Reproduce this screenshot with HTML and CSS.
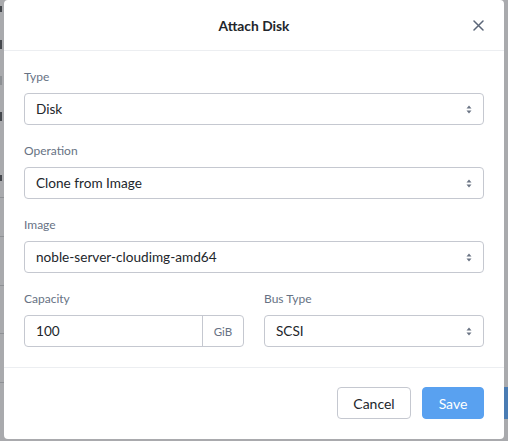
FILE: index.html
```html
<!DOCTYPE html>
<html>
<head>
<meta charset="utf-8">
<link rel="stylesheet" href="styles.css">
</head>
<body>
<div class="backdrop">
  <div class="bg-left">
    <span class="bg-l l1"></span>
    <span class="bg-l l2"></span>
    <span class="bg-l l3"></span>
    <span class="bg-l l4"></span>
    <span class="bg-l l5"></span>
    <span class="bg-line b1"></span>
    <span class="bg-line b2"></span>
    <span class="bg-line b3"></span>
    <span class="bg-line b4"></span>
    <span class="bg-line b5"></span>
  </div>
  <div class="bg-right-btn"></div>
</div>
<div class="modal">
  <div class="modal-header">
    <div class="modal-title">Attach Disk</div>
    <button class="close" aria-label="Close">
      <svg width="11" height="11" viewBox="0 0 11 11"><path d="M1 1L10 10M10 1L1 10" stroke="#5b6678" stroke-width="1.5" stroke-linecap="round"/></svg>
    </button>
  </div>
  <div class="modal-body">
    <div class="field">
      <div class="label">Type</div>
      <div class="select"><span>Disk</span><span class="arrows"><svg width="6" height="9" viewBox="0 0 6 9"><path d="M3 0.5L5.5 3.5H0.5Z M3 8.5L5.5 5.5H0.5Z" fill="#6b7484"/></svg></span></div>
    </div>
    <div class="field">
      <div class="label">Operation</div>
      <div class="select"><span>Clone from Image</span><span class="arrows"><svg width="6" height="9" viewBox="0 0 6 9"><path d="M3 0.5L5.5 3.5H0.5Z M3 8.5L5.5 5.5H0.5Z" fill="#6b7484"/></svg></span></div>
    </div>
    <div class="field">
      <div class="label">Image</div>
      <div class="select"><span>noble-server-cloudimg-amd64</span><span class="arrows"><svg width="6" height="9" viewBox="0 0 6 9"><path d="M3 0.5L5.5 3.5H0.5Z M3 8.5L5.5 5.5H0.5Z" fill="#6b7484"/></svg></span></div>
    </div>
    <div class="row">
      <div class="field">
        <div class="label">Capacity</div>
        <div class="input-group">
          <span class="input-value">100</span>
          <span class="addon">GiB</span>
        </div>
      </div>
      <div class="field">
        <div class="label">Bus Type</div>
        <div class="select"><span>SCSI</span><span class="arrows"><svg width="6" height="9" viewBox="0 0 6 9"><path d="M3 0.5L5.5 3.5H0.5Z M3 8.5L5.5 5.5H0.5Z" fill="#6b7484"/></svg></span></div>
      </div>
    </div>
  </div>
  <div class="modal-footer">
    <button class="btn btn-cancel">Cancel</button>
    <button class="btn btn-save">Save</button>
  </div>
</div>
</body>
</html>
```
FILE: styles.css
```css
* { box-sizing: border-box; }
html, body { margin: 0; padding: 0; }
body {
  width: 508px;
  height: 441px;
  overflow: hidden;
  background: #a9aaad;
  font-family: "Lato", "Open Sans", sans-serif;
  color: #22262b;
  position: relative;
}
.backdrop { position: absolute; inset: 0; }
.bg-left { position: absolute; left: 0; top: 0; width: 4px; height: 441px; }
.bg-l { position: absolute; left: 0; width: 2px; height: 9px; background: #45484d; }
.l1 { top: 6px; height: 6px; }
.l2 { top: 40px; }
.l3 { top: 76px; background: #8d9094; }
.l4 { top: 112px; }
.l5 { top: 175px; height: 6px; }
.bg-line { position: absolute; left: 0; width: 4px; height: 1px; background: #8f9195; }
.b1 { top: 197px; }
.b2 { top: 236px; }
.b3 { top: 285px; }
.b4 { top: 333px; }
.b5 { top: 382px; }
.bg-right-btn {
  position: absolute; left: 504px; top: 387px; width: 4px; height: 32px;
  background: #4a7cb3;
}
.modal {
  position: absolute;
  left: 4px;
  top: 0;
  width: 500px;
  height: 439px;
  background: #fff;
  border-radius: 4px;
  display: flex;
  flex-direction: column;
}
.modal-header {
  height: 51px;
  border-bottom: 1px solid #eceef1;
  display: flex;
  align-items: center;
  justify-content: center;
  position: relative;
}
.modal-title {
  font-size: 13.8px;
  font-weight: 700;
  color: #22262b;
}
.close {
  position: absolute;
  right: 20px;
  top: 20px;
  border: 0;
  background: none;
  padding: 0;
  width: 11px;
  height: 11px;
  display: flex;
}
.modal-body {
  padding: 18px 20px 20px;
  border-bottom: 1px solid #eceef1;
}
.field { margin-bottom: 18px; }
.field:last-child, .row .field { margin-bottom: 0; }
.label {
  font-size: 12px;
  line-height: 16px;
  color: #677284;
  margin-bottom: 8px;
}
.select, .input-group {
  height: 32px;
  border: 1px solid #c5c8d0;
  border-radius: 4px;
  display: flex;
  align-items: center;
  font-size: 13.6px;
  color: #22262b;
}
.select { padding: 0 11px 0 11px; justify-content: space-between; }
.arrows { display: flex; align-items: center; }
.row {
  display: grid;
  grid-template-columns: 1fr 1fr;
  column-gap: 20px;
}
.input-group { padding: 0; }
.input-value { flex: 1; padding-left: 11px; }
.addon {
  width: 41px;
  height: 100%;
  border-left: 1px solid #c5c8d0;
  display: flex;
  align-items: center;
  justify-content: center;
  font-size: 11.5px;
  color: #677284;
}
.modal-footer {
  display: flex;
  justify-content: flex-end;
  gap: 11px;
  padding: 19px 20px 20px;
}
.btn {
  height: 32px;
  border-radius: 4px;
  font-family: "Lato", "Open Sans", sans-serif;
  font-size: 14px;
  padding: 0;
}
.btn-cancel {
  width: 74px;
  background: #fff;
  border: 1px solid #c5c8d0;
  color: #22262b;
}
.btn-save {
  width: 62px;
  background: #59a1f0;
  border: 1px solid #59a1f0;
  color: #fff;
}
```
